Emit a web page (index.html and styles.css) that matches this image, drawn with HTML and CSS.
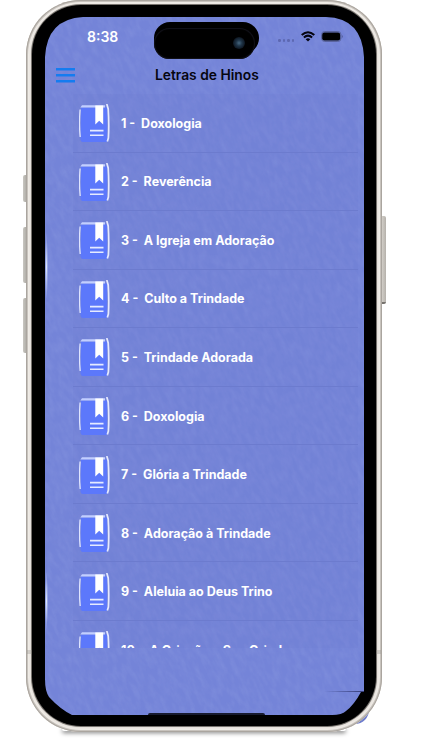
FILE: index.html
```html
<!DOCTYPE html>
<html lang="pt">
	<head>
		<meta charset="utf-8">
		<title>Letras de Hinos</title>
		<meta name="viewport" content="width=device-width, initial-scale=1">
		<link rel="stylesheet" href="styles.css">
	</head>
	<body>
		<div class="phone">
			<div class="corner"></div>
			<div class="side-btn btn-mute"></div>
			<div class="side-btn btn-up"></div>
			<div class="side-btn btn-down"></div>
			<div class="side-btn btn-power"></div>
			<div class="frame">
				<div class="bezel">
					<div class="screen">
						<svg class="texture" width="319" height="699">
							<filter id="grain" x="0" y="0" width="100%" height="100%">
								<feTurbulence type="fractalNoise" baseFrequency="0.2 0.09" numOctaves="3" seed="4"/>
								<feColorMatrix values="0 0 0 0 0.62  0 0 0 0 0.68  0 0 0 0 0.96  1.1 0 0 0 -0.35"/>
							</filter>
							<rect x="-400" y="-300" width="1100" height="1400" transform="rotate(-25)" filter="url(#grain)"/>
						</svg>
						<div class="status">
							<span class="time">8:38</span>
							<div class="island"><div class="camera"></div></div>
							<div class="signals">
								<div class="dots"><i></i><i></i><i></i><i></i></div>
								<svg class="wifi" width="14" height="11" viewBox="0 0 14 11">
									<g fill="none" stroke="#05050f" stroke-width="2">
										<path d="M.7 4.1Q7-1.7 13.3 4.1"/>
										<path d="M2.9 6.5Q7 2.8 11.1 6.5"/>
									</g>
									<path d="M4.7 8.2Q7 6.3 9.3 8.2L7 10.6z" fill="#05050f"/>
								</svg>
								<svg class="battery" width="23" height="11" viewBox="0 0 23 11">
									<rect x=".5" y=".5" width="19.5" height="10" rx="3.2" fill="none" stroke="#5a649f"/>
									<rect x="1.2" y="1.5" width="18" height="8" rx="2.2" fill="#000"/>
									<path d="M21 3.8q1.6 1.7 0 3.4z" fill="#4f5891"/>
								</svg>
							</div>
						</div>
						<header class="navbar">
							<div class="menu"><span></span><span></span><span></span></div>
							<h1>Letras de Hinos</h1>
						</header>
						<ul class="list" id="list"></ul>
						<div class="home"></div>
						<div class="shine shine-mid"></div>
						<div class="shine shine-low"></div>
						<div class="edge"></div>
					</div>
				</div>
				<div class="band band-left"></div>
				<div class="band band-right"></div>
			</div>
		</div>
		<svg width="0" height="0" class="defs">
			<symbol id="book" viewBox="0 0 31 39">
				<path d="M2 3.5H28V38H3Q1.5 37 1.5 35z" fill="#5c78fb"/>
				<path d="M1.2 33Q-.1 20 1.1 5.5" fill="none" stroke="#dfe5ff" stroke-width="1.3"/>
				<path d="M3 1.2H26V3.6H1.4z" fill="#c3cfff"/>
				<path d="M16.3 1.6H24.2V20.5L20.2 16.7L16.3 20.5z" fill="#fff"/>
				<path d="M27.8 0L29.2 5Q30.2 20 29.4 34L28.3 37.6" fill="none" stroke="#e6eaff" stroke-width="1.7"/>
				<path d="M11 26.6H24.5M11 31.2H24.5" stroke="#e6ebff" stroke-width="1.6"/>
			</symbol>
		</svg>
		<script type="text/javascript">
			let list = document.getElementById("list");
			let hymns = [
				"Doxologia",
				"Reverência",
				"A Igreja em Adoração",
				"Culto a Trindade",
				"Trindade Adorada",
				"Doxologia",
				"Glória a Trindade",
				"Adoração à Trindade",
				"Aleluia ao Deus Trino",
				"A Criação e Seu Criador",
			]
			for(let i=0;i<hymns.length;i++){
				let item = document.createElement("li");
				item.innerHTML = '<svg class="book" width="31" height="39"><use href="#book"/></svg><span></span>';
				item.lastChild.textContent = (i+1)+" -  "+hymns[i];
				list.appendChild(item);
			}
		</script>
	</body>
</html>
```
FILE: styles.css
```css
*{
	box-sizing: border-box;
}
body{
	margin: 0;
	height: 750px;
	background-color: #fff;
	overflow: hidden;
	font-family: Inter, sans-serif;
}
.defs{
	position: absolute;
}
.phone{
	position: relative;
	width: 356px;
	height: 732px;
	margin-left: 26px;
}
.phone::before{
	content: "";
	position: absolute;
	left: 36px;
	right: 36px;
	bottom: 1px;
	height: 4px;
	border-radius: 8px;
	box-shadow: 0 2px 4px rgba(0,0,0,.5);
}
.frame{
	position: relative;
	height: 100%;
	padding: 5px 6px 6px;
	border-radius: 55px;
	background-color: #e3ded8;
	box-shadow: inset 0 0 0 1px #aaa59f, inset 0 0 0 2px #c8c3bd, inset 0 0 2px 4px #efebe6;
}
.bezel{
	height: 100%;
	padding: 12px 12px 11px 13px;
	border-radius: 49px;
	background-color: #000;
	box-shadow: 0 0 0 1px #77736e;
}
.screen{
	position: relative;
	width: 319px;
	height: 698px;
	background-color: #7484d8;
	clip-path: path("M0 40Q2 2 38 0H281Q317 1 319 40V675H316Q309 688 301 694Q297 698 287 698H27Q15 692 4 680Q0 674 0 662Z");
	display: flex;
	flex-direction: column;
}
.texture{
	position: absolute;
	top: 0;
	left: 0;
	opacity: .16;
}
.status{
	position: relative;
	height: 42px;
	flex: none;
	display: flex;
}
.time{
	width: 109px;
	padding: 11px 0 0 42px;
	color: #fff;
	font-size: 14px;
	line-height: 17px;
	font-weight: 600;
}
.island{
	position: relative;
	width: 105px;
	height: 37px;
	margin-top: 5px;
	padding: 15px 0 0 79px;
}
.island::before,
.island::after{
	content: "";
	position: absolute;
	left: 0;
	background-color: #000;
}
.island::before{
	top: 0;
	width: 105px;
	height: 32px;
	border-radius: 16px;
}
.island::after{
	top: 6px;
	width: 101px;
	height: 31px;
	border-radius: 16px;
	box-shadow: inset 0 0 1px 1px #12121a;
}
.camera{
	position: relative;
	z-index: 1;
	width: 12px;
	height: 12px;
	border-radius: 50%;
	background: radial-gradient(circle, #46677f 0, #1f3447 35%, #0e1722 70%, #04060a 100%);
}
.signals{
	display: flex;
	align-items: center;
	height: 11px;
	margin: 14px 0 0 19px;
}
.dots{
	display: flex;
	gap: 2px;
	width: 23px;
	padding-top: 8px;
}
.dots i{
	width: 2.5px;
	height: 2.5px;
	border-radius: 50%;
	background-color: #5d68b2;
}
.battery{
	margin-left: 6px;
}
.navbar{
	position: relative;
	height: 35px;
	flex: none;
	display: flex;
}
.menu{
	width: 110px;
	padding: 9px 0 0 11px;
}
.menu span{
	display: block;
	width: 19px;
	height: 3px;
	margin-bottom: 3px;
	background-color: #147cf0;
	border-bottom: 1px solid #4780e4;
}
h1{
	margin: 8px 0 0;
	color: #06060f;
	font-size: 13.8px;
	line-height: 17px;
	font-weight: 600;
}
.list{
	position: relative;
	flex: none;
	height: 554px;
	margin: 0 6px 0 28px;
	padding: 0;
	list-style: none;
	overflow: hidden;
}
.list li{
	display: flex;
	align-items: center;
	height: 58.55px;
	padding: 1px 0 0 6px;
	border-bottom: 1px solid #6c7bce;
	background-color: rgba(105,122,210,.15);
	color: #fff;
	font-size: 12.5px;
	line-height: 18px;
	font-weight: 700;
	white-space: pre;
}
.list li span{
	padding-top: 1px;
}
.book{
	margin: 1px 11px 0 0;
	flex: none;
}
.home{
	position: absolute;
	left: 103px;
	bottom: 0;
	width: 117px;
	height: 2px;
	border-radius: 2px 2px 0 0;
	background-color: #171a2d;
}
.shine{
	position: absolute;
	left: 0;
	width: 3px;
	background: radial-gradient(closest-side, #dce7ff, rgba(180,200,255,0));
}
.shine-mid{
	top: 217px;
	height: 66px;
}
.shine-low{
	top: 555px;
	height: 58px;
}
.edge{
	position: absolute;
	right: 0;
	bottom: 23px;
	width: 40px;
	height: 1px;
	background: linear-gradient(to right, rgba(60,70,140,0), #343c78);
}
.side-btn{
	position: absolute;
	left: -3px;
	width: 4px;
	border-radius: 2px 0 0 2px;
	background: linear-gradient(to right, #c9c7c2, #aaa7a0);
}
.btn-mute{
	top: 175px;
	height: 27px;
}
.btn-up{
	top: 227px;
	height: 56px;
}
.btn-down{
	top: 298px;
	height: 55px;
}
.btn-power{
	left: 355px;
	top: 216px;
	width: 5px;
	height: 88px;
	border-radius: 0 2px 2px 0;
	border-bottom: 2px solid #77736e;
	background: linear-gradient(to right, #d8d4ce, #b5b1ab);
}
.band{
	position: absolute;
	width: 5px;
	height: 4px;
	background-color: rgba(140,135,128,.3);
}
.band-left{
	left: 1px;
	top: 650px;
}
.band-right{
	right: 1px;
	top: 650px;
}
.corner{
	position: absolute;
	left: 318px;
	top: 698px;
	width: 25px;
	height: 26px;
	border-radius: 0 0 14px 0;
	background-color: #6f7dcc;
}
```
